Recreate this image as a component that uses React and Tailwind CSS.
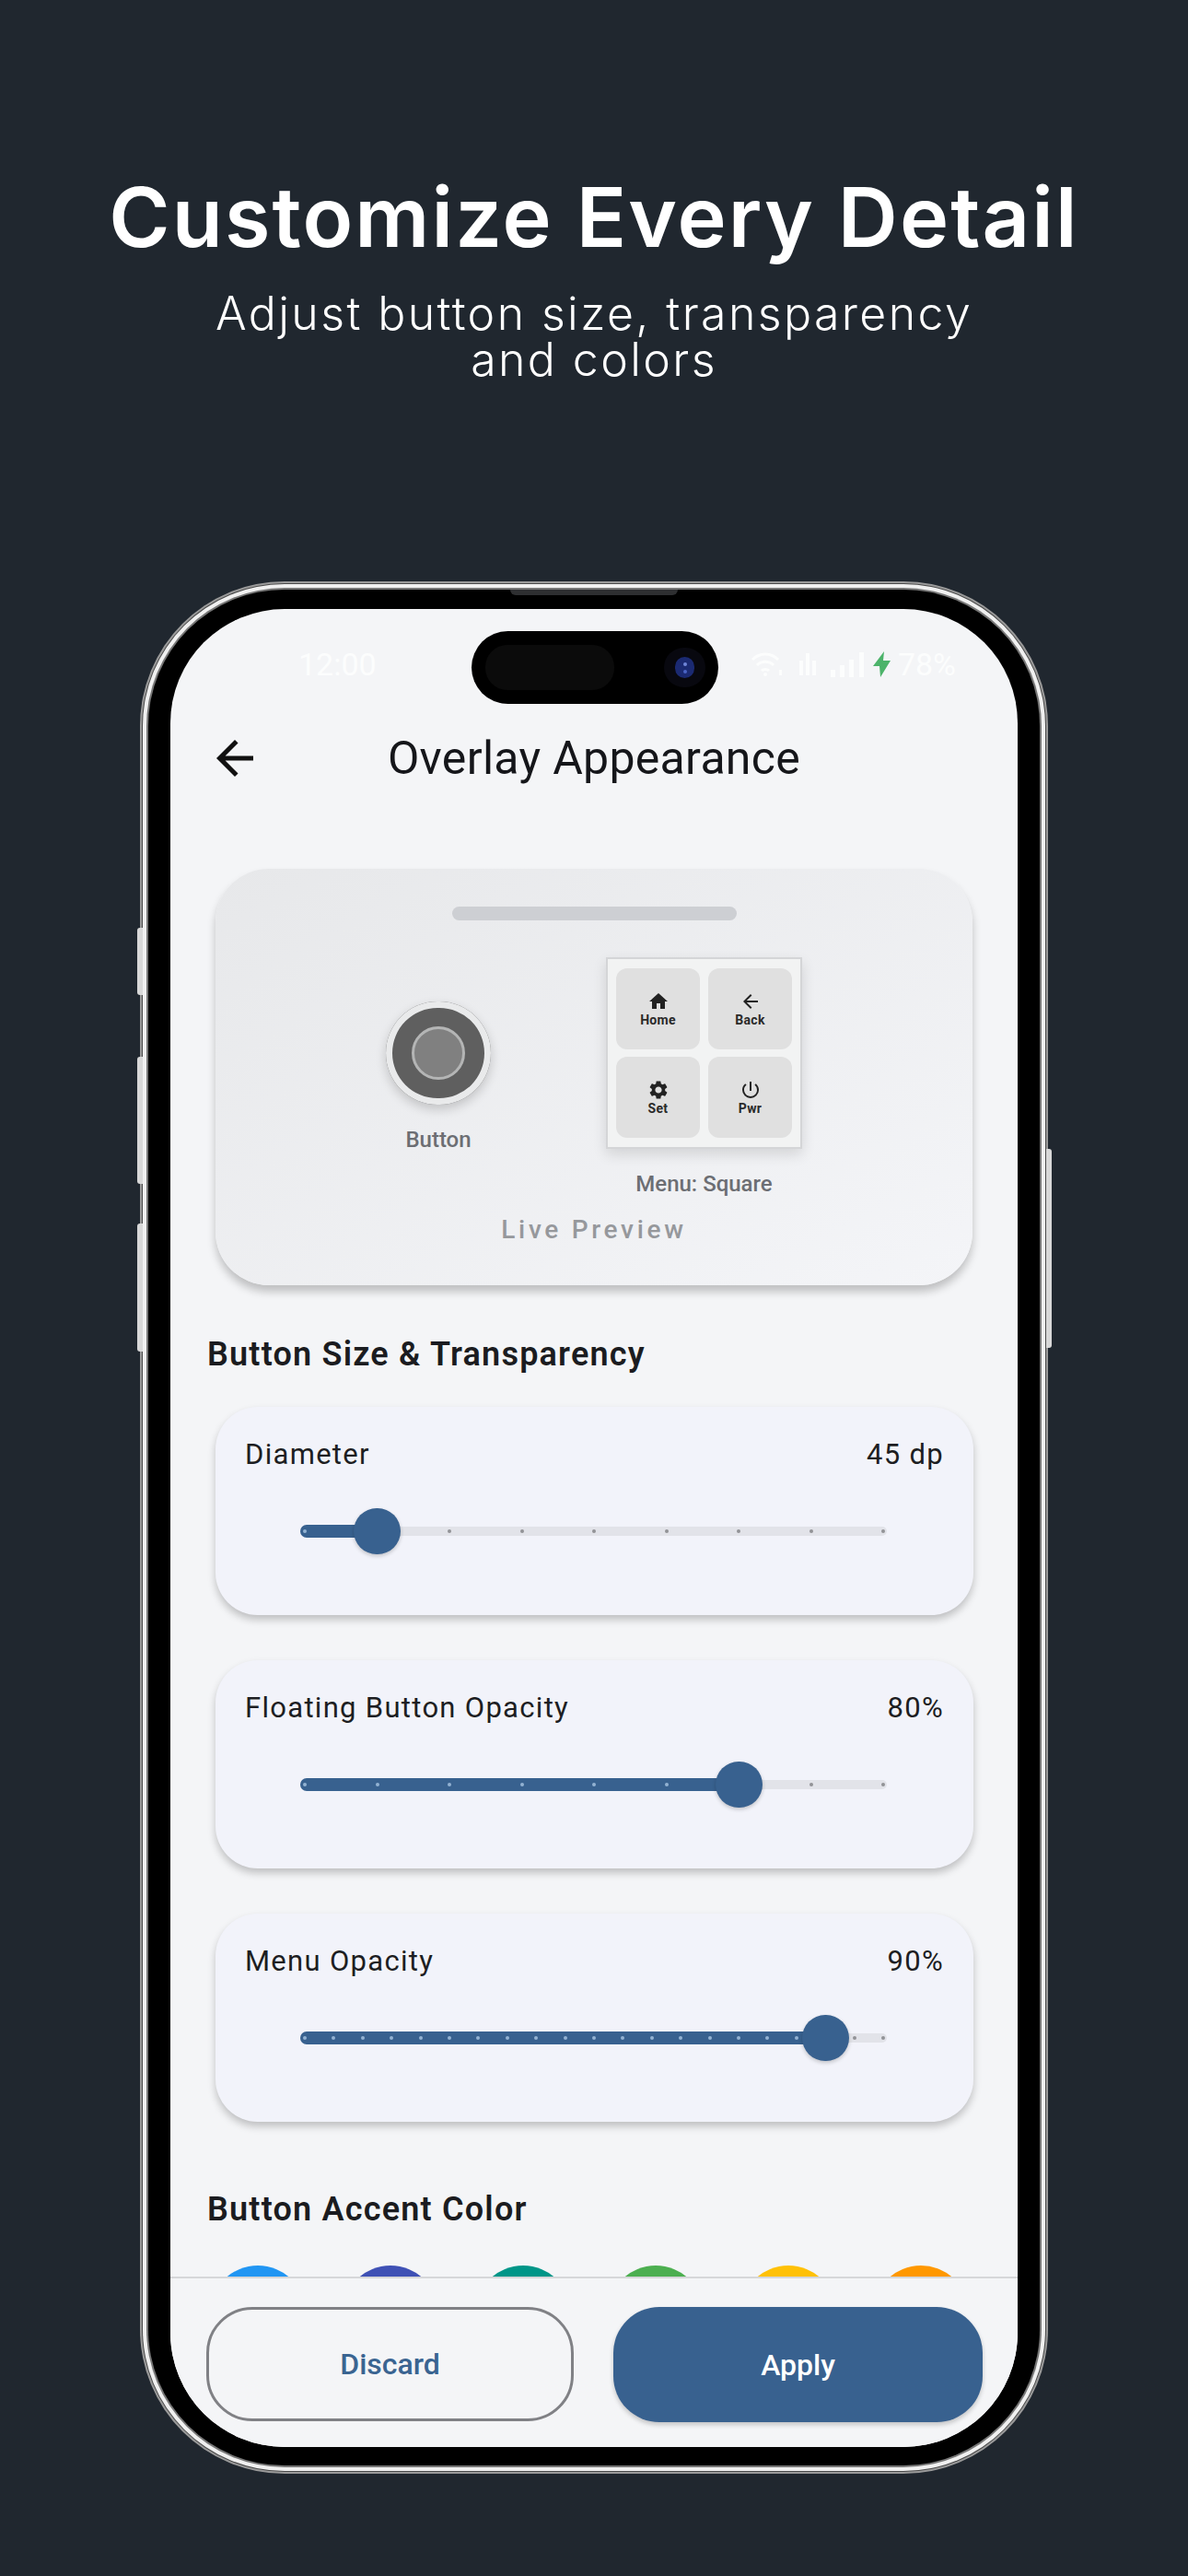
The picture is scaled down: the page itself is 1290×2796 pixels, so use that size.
import { MdArrowBack, MdHome, MdPowerSettingsNew, MdSettings } from 'react-icons/md'

const sliders = [
  { label: 'Diameter', value: '45 dp', steps: 8, at: 1 },
  { label: 'Floating Button Opacity', value: '80%', steps: 8, at: 6 },
  { label: 'Menu Opacity', value: '90%', steps: 20, at: 18 },
]

const tiles = [
  { label: 'Home', Icon: MdHome },
  { label: 'Back', Icon: MdArrowBack },
  { label: 'Set', Icon: MdSettings },
  { label: 'Pwr', Icon: MdPowerSettingsNew },
]

const swatches = ['bg-[#2196f3]', 'bg-[#3f51b5]', 'bg-[#009688]', 'bg-[#4caf50]', 'bg-[#ffc107]', 'bg-[#ff9800]']

function StatusBar() {
  return (
    <div className="flex h-[118px] shrink-0 items-center justify-between pl-[139px] pr-[67px] pt-[2px] text-[#fcfdfd]">
      <span className="text-[34px] leading-none">12:00</span>
      <div className="flex items-center">
        <svg width="34" height="28" viewBox="0 0 34 28" fill="none" stroke="#fcfdfd" strokeWidth="3">
          <path d="M1 9c8-8 20-8 28 0M6 15c5-5 13-5 18 0M11 21c2-2 6-2 8 0" />
          <circle cx="15" cy="25" r="2" fill="#fcfdfd" stroke="none" />
          <rect x="30" y="20" width="3" height="6" fill="#fcfdfd" stroke="none" />
        </svg>
        <svg className="ml-[17px]" width="20" height="26" viewBox="0 0 20 26" fill="#fcfdfd">
          <rect x="1" y="9" width="4" height="16" />
          <rect x="8" y="1" width="4" height="24" />
          <rect x="15" y="9" width="4" height="16" />
        </svg>
        <svg className="ml-[15px]" width="36" height="28" viewBox="0 0 36 28" fill="#fcfdfd">
          <rect x="0" y="20" width="5" height="8" />
          <rect x="10" y="15" width="5" height="13" />
          <rect x="20" y="9" width="5" height="19" />
          <rect x="31" y="1" width="5" height="27" />
        </svg>
        <svg className="ml-[10px]" width="19" height="28" viewBox="0 0 19 28" fill="#4cb36a">
          <path d="M12 0 0 16h7l1 12L19 10h-8z" />
        </svg>
        <span className="ml-[8px] text-[34px] leading-none">78%</span>
      </div>
    </div>
  )
}

function Island() {
  return (
    <div className="absolute left-[327px] top-[24px] flex h-[79px] w-[268px] items-center justify-between rounded-full bg-black pl-[15px] pr-[14px]">
      <div className="h-[49px] w-[140px] rounded-[24px] bg-[#0b0b0b]" />
      <div className="flex h-[43px] w-[45px] items-center justify-center rounded-full bg-[#08080f]">
        <div className="flex h-[23px] w-[21px] flex-col items-center justify-center gap-[4px] rounded-full bg-[#1b2a72]">
          <div className="h-[4px] w-[4px] rounded-full bg-[#6f86d8]" />
          <div className="h-[4px] w-[4px] rounded-full bg-[#4a64c4]" />
        </div>
      </div>
    </div>
  )
}

function Preview() {
  return (
    <div className="ml-[49px] flex h-[452px] w-[822px] flex-col items-center rounded-[58px] bg-gradient-to-br from-[#e7e8ea] to-[#f4f5f8] pt-[41px] shadow-[0_7px_10px_rgba(0,0,0,0.22)]">
      <div className="h-[15px] w-[309px] rounded-full bg-[#cdcfd3]" />
      <div className="mt-[40px] flex items-center gap-[125px]">
        <div className="flex flex-col items-center">
          <div className="flex h-[112px] w-[114px] items-center justify-center rounded-full bg-[#5f5f5f] ring-[7px] ring-inset ring-[#e9eaeb] shadow-[0_5px_12px_rgba(0,0,0,0.18)]">
            <div className="h-[58px] w-[58px] rounded-full border-[3px] border-[#b4b5b5] bg-[#808080]" />
          </div>
          <span className="mt-[26px] text-[24px] font-medium leading-[24px] text-[#6c6e73]">Button</span>
        </div>
        <div className="flex flex-col items-center">
          <div className="grid h-[208px] w-[213px] grid-cols-2 gap-x-[9px] gap-y-[8px] border-2 border-[#d4d5d7] bg-[#f2f3f3] px-[9px] py-[10px] shadow-[0_6px_14px_rgba(0,0,0,0.12)]">
            {tiles.map(({ label, Icon }) => (
              <div key={label} className="flex flex-col items-center justify-center rounded-[12px] bg-[#e0e0e0] pb-[1px] text-[#2a2a2a]">
                <Icon size={24} className="text-[#222222]" />
                <span className="text-[14px] font-bold leading-[16px] tracking-[0.3px]">{label}</span>
              </div>
            ))}
          </div>
          <span className="mt-[26px] text-[24px] font-medium leading-[24px] text-[#6c6e73]">Menu: Square</span>
        </div>
      </div>
      <span className="mt-[23px] text-[28px] font-medium leading-[30px] tracking-[3.7px] text-[#96989c]">Live Preview</span>
    </div>
  )
}

function Slider({ steps, at }) {
  const marks = Array.from({ length: steps + 1 }, (_, i) => i)
  return (
    <div className="relative ml-[92px] mt-[38px] flex h-[50px] w-[637px] items-center">
      <div className="h-[10px] w-full rounded-full bg-[#e2e3e9]" />
      <div
        className="absolute left-0 h-[14px] rounded-full bg-[#38618f]"
        style={{ width: `${5 + (628 * at) / steps}px` }}
      />
      {marks.map((i) => (
        <div
          key={i}
          className={`absolute h-[4px] w-[4px] rounded-full ${i < at ? 'bg-[#93b2d2]' : 'bg-[#929397]'}`}
          style={{ left: `${3 + (628 * i) / steps}px` }}
        />
      ))}
      <div
        className="absolute h-[50px] w-[51px] rounded-full bg-[#38618f] shadow-[0_2px_4px_rgba(0,0,0,0.2)]"
        style={{ left: `${5 + (628 * at) / steps - 25.5}px` }}
      />
    </div>
  )
}

function SliderCard({ label, value, steps, at }) {
  return (
    <div className="ml-[49px] h-[226px] w-[823px] rounded-[46px] bg-[#f2f3fa] pt-[32px] shadow-[0_5px_8px_rgba(0,0,0,0.22)]">
      <div className="flex items-center justify-between pl-[32px] pr-[32px] text-[31px] leading-[40px] tracking-[1.3px] text-[#1d1e22]">
        <span>{label}</span>
        <span>{value}</span>
      </div>
      <Slider steps={steps} at={at} />
    </div>
  )
}

function BottomBar() {
  return (
    <div className="flex h-[185px] shrink-0 justify-between border-t-2 border-[#d6d7d9] bg-[#f4f5f7] pl-[39px] pr-[38px] pt-[31px]">
      <button className="h-[124px] w-[399px] rounded-[50px] border-[3px] border-[#808185] text-[32px] font-medium text-[#3a6491]">
        Discard
      </button>
      <button className="h-[125px] w-[401px] rounded-[50px] bg-[#38618f] text-[32px] font-medium text-white shadow-[0_3px_5px_rgba(0,0,0,0.2)]">
        Apply
      </button>
    </div>
  )
}

function Phone() {
  return (
    <div className="relative ml-[152px] w-[986px]">
      <div className="absolute -left-[3px] top-[376px] h-[73px] w-[6px] rounded-l-[3px] bg-[#d8d8d8]" />
      <div className="absolute -left-[3px] top-[516px] h-[138px] w-[6px] rounded-l-[3px] bg-[#d8d8d8]" />
      <div className="absolute -left-[3px] top-[697px] h-[139px] w-[6px] rounded-l-[3px] bg-[#d8d8d8]" />
      <div className="absolute -right-[4px] top-[616px] h-[216px] w-[6px] rounded-r-[3px] bg-[#d8d8d8]" />
      <div className="rounded-[157px] bg-[#9a9a9a] p-[2px]">
        <div className="rounded-[155px] bg-[#4a4a4a] p-[1px]">
          <div className="rounded-[154px] bg-[#f0f0f0] p-[4px]">
            <div className="rounded-[150px] bg-[#777777] p-[2px]">
              <div className="relative rounded-[148px] bg-black px-[24px] pb-[20px] pt-[21px]">
                <div className="absolute left-[393px] top-0 h-[6px] w-[182px] rounded-b-[6px] bg-[#2e2f31]" />
                <div className="relative flex h-[1995px] flex-col overflow-hidden rounded-[124px] bg-[#f4f5f7] text-left font-['Roboto',sans-serif]">
                  <StatusBar />
                  <Island />
                  <div className="flex h-[88px] shrink-0 items-center justify-center">
                    <MdArrowBack size={60} className="absolute left-[40px] text-[#111111]" />
                    <h2 className="text-[50px] leading-none tracking-[0.3px] text-[#15161a]">Overlay Appearance</h2>
                  </div>
                  <div className="min-h-0 flex-1 overflow-hidden pt-[76px]">
                    <Preview />
                    <h3 className="ml-[40px] mt-[55px] text-[36px] font-semibold leading-[40px] tracking-[1.2px] text-[#1b1c20]">Button Size &amp; Transparency</h3>
                    <div className="mt-[37px] flex flex-col gap-[49px]">
                      {sliders.map((s) => (
                        <SliderCard key={s.label} {...s} />
                      ))}
                    </div>
                    <h3 className="ml-[40px] mt-[75px] text-[36px] font-semibold leading-[40px] tracking-[1.2px] text-[#1b1c20]">Button Accent Color</h3>
                    <div className="ml-[43px] mt-[41px] flex gap-[40px]">
                      {swatches.map((c) => (
                        <div key={c} className={`h-[104px] w-[104px] shrink-0 rounded-full ${c}`} />
                      ))}
                    </div>
                  </div>
                  <BottomBar />
                </div>
              </div>
            </div>
          </div>
        </div>
      </div>
    </div>
  )
}

export default function App() {
  return (
    <div className="min-h-[2796px] bg-[#20272f] pt-[186px] text-center font-['Inter',sans-serif] text-white">
      <h1 className="text-[90px] font-semibold leading-[100px] tracking-[2.1px]">Customize Every Detail</h1>
      <p className="mt-[29px] text-[50px] font-light leading-[50px] tracking-[2.4px]">
        Adjust button size, transparency
        <br />
        and colors
      </p>
      <div className="mt-[216px]">
        <Phone />
      </div>
    </div>
  )
}
